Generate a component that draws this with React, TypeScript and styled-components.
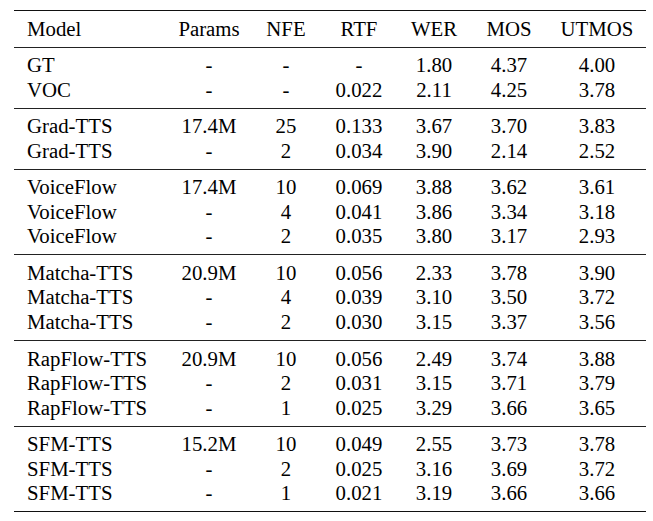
import { FC } from 'react';
import styled, { createGlobalStyle } from 'styled-components';

const GlobalStyle = createGlobalStyle`
  html, body {
    margin: 0;
    padding: 0;
    background: #ffffff;
  }
  body {
    font-family: 'Liberation Serif', 'Times New Roman', serif;
    color: #000000;
  }
`;

const COLUMNS = '151px 88px 66px 80px 70px 80px 96px';

const Page = styled.div`
  width: 653px;
  height: 521px;
  padding: 10px 0 0 14px;
  box-sizing: border-box;
`;

const Table = styled.div`
  width: 632px;
  border-top: 1.5px solid #111;
  border-bottom: 1.7px solid #111;
`;

const Group = styled.div<{ $last?: boolean }>`
  padding: 5.5px 0;
  border-bottom: ${({ $last }) => ($last ? 'none' : '1px solid #222')};
`;

const HeaderGroup = styled(Group)`
  padding: 5.5px 0 5.5px;
`;

const Row = styled.div`
  display: grid;
  grid-template-columns: ${COLUMNS};
  height: 24.55px;
  line-height: 24.55px;
  font-size: 20.8px;
  white-space: nowrap;
`;

const Cell = styled.div<{ $left?: boolean }>`
  text-align: ${({ $left }) => ($left ? 'left' : 'center')};
  padding-left: ${({ $left }) => ($left ? '13px' : '0')};
`;

type Line = [string, string, string, string, string, string, string];

const header: Line = ['Model', 'Params', 'NFE', 'RTF', 'WER', 'MOS', 'UTMOS'];

const groups: Line[][] = [
  [
    ['GT', '-', '-', '-', '1.80', '4.37', '4.00'],
    ['VOC', '-', '-', '0.022', '2.11', '4.25', '3.78'],
  ],
  [
    ['Grad-TTS', '17.4M', '25', '0.133', '3.67', '3.70', '3.83'],
    ['Grad-TTS', '-', '2', '0.034', '3.90', '2.14', '2.52'],
  ],
  [
    ['VoiceFlow', '17.4M', '10', '0.069', '3.88', '3.62', '3.61'],
    ['VoiceFlow', '-', '4', '0.041', '3.86', '3.34', '3.18'],
    ['VoiceFlow', '-', '2', '0.035', '3.80', '3.17', '2.93'],
  ],
  [
    ['Matcha-TTS', '20.9M', '10', '0.056', '2.33', '3.78', '3.90'],
    ['Matcha-TTS', '-', '4', '0.039', '3.10', '3.50', '3.72'],
    ['Matcha-TTS', '-', '2', '0.030', '3.15', '3.37', '3.56'],
  ],
  [
    ['RapFlow-TTS', '20.9M', '10', '0.056', '2.49', '3.74', '3.88'],
    ['RapFlow-TTS', '-', '2', '0.031', '3.15', '3.71', '3.79'],
    ['RapFlow-TTS', '-', '1', '0.025', '3.29', '3.66', '3.65'],
  ],
  [
    ['SFM-TTS', '15.2M', '10', '0.049', '2.55', '3.73', '3.78'],
    ['SFM-TTS', '-', '2', '0.025', '3.16', '3.69', '3.72'],
    ['SFM-TTS', '-', '1', '0.021', '3.19', '3.66', '3.66'],
  ],
];

const TableRow: FC<{ line: Line }> = ({ line }) => (
  <Row>
    {line.map((value, i) => (
      <Cell key={i} $left={i === 0}>
        {value}
      </Cell>
    ))}
  </Row>
);

export default function App() {
  return (
    <>
      <GlobalStyle />
      <Page>
        <Table>
          <HeaderGroup>
            <TableRow line={header} />
          </HeaderGroup>
          {groups.map((rows, g) => (
            <Group key={g} $last={g === groups.length - 1}>
              {rows.map((line, r) => (
                <TableRow key={r} line={line} />
              ))}
            </Group>
          ))}
        </Table>
      </Page>
    </>
  );
}
